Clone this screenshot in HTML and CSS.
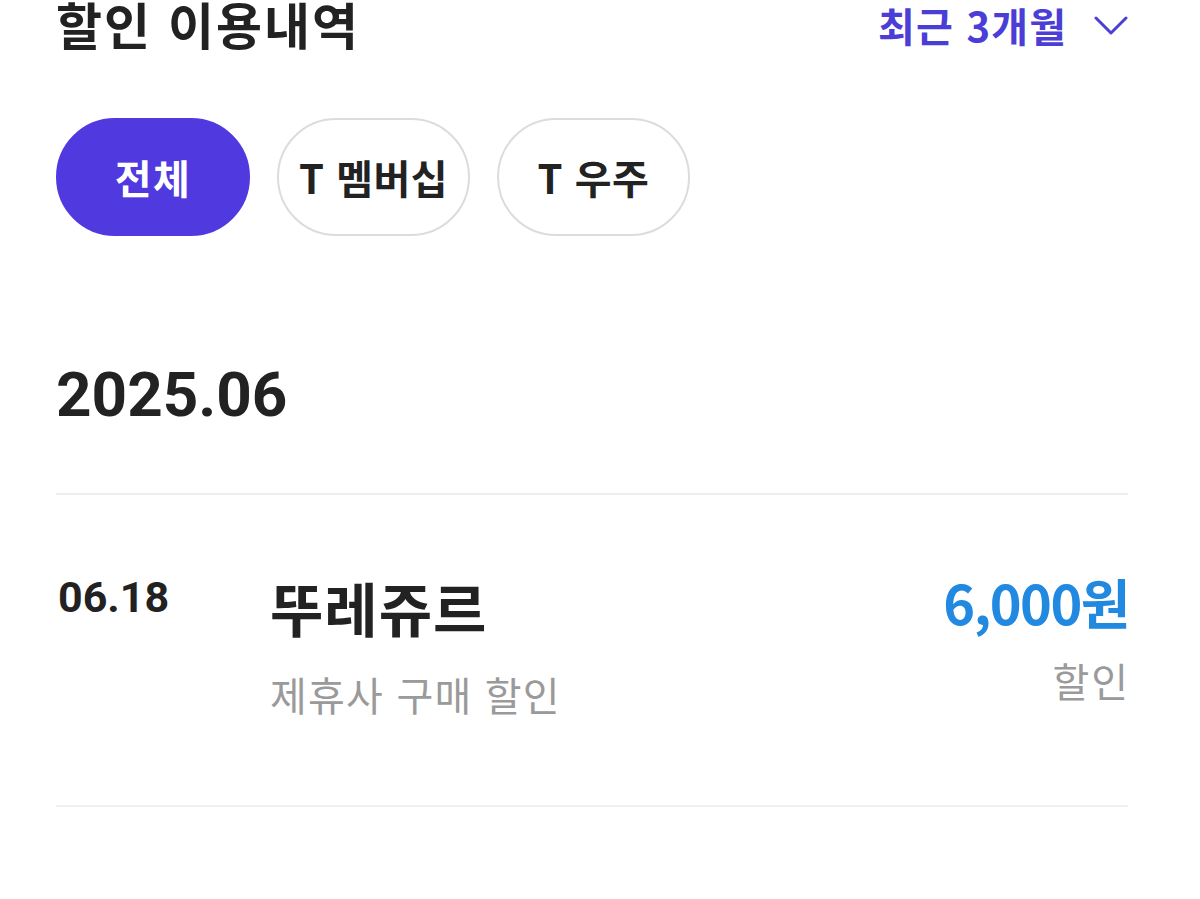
FILE: index.html
```html
<!DOCTYPE html>
<html lang="ko">
<head>
<meta charset="utf-8">
<title>할인 이용내역</title>
<link rel="stylesheet" href="styles.css">
</head>
<body>
<main class="page">
  <header class="header">
    <h1 class="title">할인 이용내역</h1>
    <button class="period" type="button">
      <span class="period-text">최근 3개월</span>
      <svg class="chevron" width="34" height="20" viewBox="0 0 34 20" aria-hidden="true">
        <path d="M2 2 L17 17 L32 2" fill="none" stroke="#4b3fd6" stroke-width="3" stroke-linecap="round" stroke-linejoin="round"/>
      </svg>
    </button>
  </header>

  <nav class="chips">
    <button class="chip chip-active" type="button">전체</button>
    <button class="chip" type="button">T 멤버십</button>
    <button class="chip" type="button">T 우주</button>
  </nav>

  <section class="month">
    <h2 class="month-title">2025.06</h2>
    <ul class="list">
      <li class="item">
        <div class="item-date">06.18</div>
        <div class="item-main">
          <div class="item-name">뚜레쥬르</div>
          <div class="item-desc">제휴사 구매 할인</div>
        </div>
        <div class="item-side">
          <div class="item-amount">6,000원</div>
          <div class="item-type">할인</div>
        </div>
      </li>
    </ul>
  </section>
</main>
</body>
</html>
```

FILE: styles.css
```css
* { box-sizing: border-box; }
html, body { margin: 0; padding: 0; background: #ffffff; }
body {
  font-family: "Noto Sans CJK KR", "Noto Sans", sans-serif;
  color: #222222;
}
.page {
  padding: 0 72px 0 56px;
}
.header {
  display: flex;
  justify-content: space-between;
  align-items: flex-start;
  height: 48px;
}
.title {
  margin: -2px 0 0 0;
  font-size: 50px;
  line-height: 1;
  font-weight: 700;
  color: #222222;
  letter-spacing: 2px;
}
.period {
  display: flex;
  align-items: center;
  gap: 28px;
  border: 0;
  background: none;
  padding: 0;
  margin-top: 5px;
  font-family: inherit;
  cursor: pointer;
}
.period-text {
  font-size: 40px;
  line-height: 1;
  font-weight: 700;
  color: #4a3ed6;
  letter-spacing: 1.2px;
  margin-right: -1.2px;
}
.chevron { display: block; margin-top: 2px; }

.chips {
  display: flex;
  gap: 27px;
  margin-top: 70px;
}
.chip {
  min-width: 193px;
  height: 118px;
  padding: 0 16px;
  border-radius: 59px;
  border: 2px solid #dcdcdc;
  background: #ffffff;
  font-family: "Noto Sans CJK KR", "Noto Sans", sans-serif;
  font-size: 40px;
  font-weight: 700;
  color: #222222;
  letter-spacing: 0.5px;
  display: flex;
  align-items: center;
  justify-content: center;
}
.chip-active {
  background: #5139e0;
  border-color: #5139e0;
  color: #ffffff;
  min-width: 194px;
  letter-spacing: 1.5px;
}

.month { margin-top: 128px; }
.month-title {
  margin: 0;
  font-family: Roboto, "Noto Sans CJK KR", sans-serif;
  font-size: 62px;
  line-height: 1;
  font-weight: 700;
  color: #222222;
  padding-bottom: 67px;
  border-bottom: 2px solid #eeeeee;
}
.list { list-style: none; margin: 0; padding: 0; }
.item {
  display: flex;
  align-items: flex-start;
  padding: 85px 0 91px;
  border-bottom: 2px solid #f1f1f1;
}
.item-date {
  width: 214px;
  flex-shrink: 0;
  font-family: Roboto, "Noto Sans CJK KR", sans-serif;
  font-size: 43px;
  line-height: 1;
  font-weight: 700;
  color: #222222;
  margin-top: -4px;
  padding-left: 2px;
}
.item-main { flex: 1; }
.item-name {
  margin-top: -2px;
  font-size: 58px;
  line-height: 1;
  font-weight: 700;
  color: #222222;
  letter-spacing: 1px;
}
.item-desc {
  margin-top: 38px;
  font-size: 40px;
  line-height: 1;
  font-weight: 400;
  color: #9a9a9a;
  letter-spacing: 1.2px;
}
.item-side { text-align: right; }
.item-amount {
  margin-top: -5px;
  font-size: 54px;
  line-height: 1;
  font-weight: 700;
  color: #2289e0;
  letter-spacing: -1.5px;
  margin-right: -1px;
}
.item-type {
  margin-top: 31px;
  font-size: 40px;
  line-height: 1;
  font-weight: 400;
  color: #9a9a9a;
  letter-spacing: 2px;
  margin-right: -2px;
}
```
